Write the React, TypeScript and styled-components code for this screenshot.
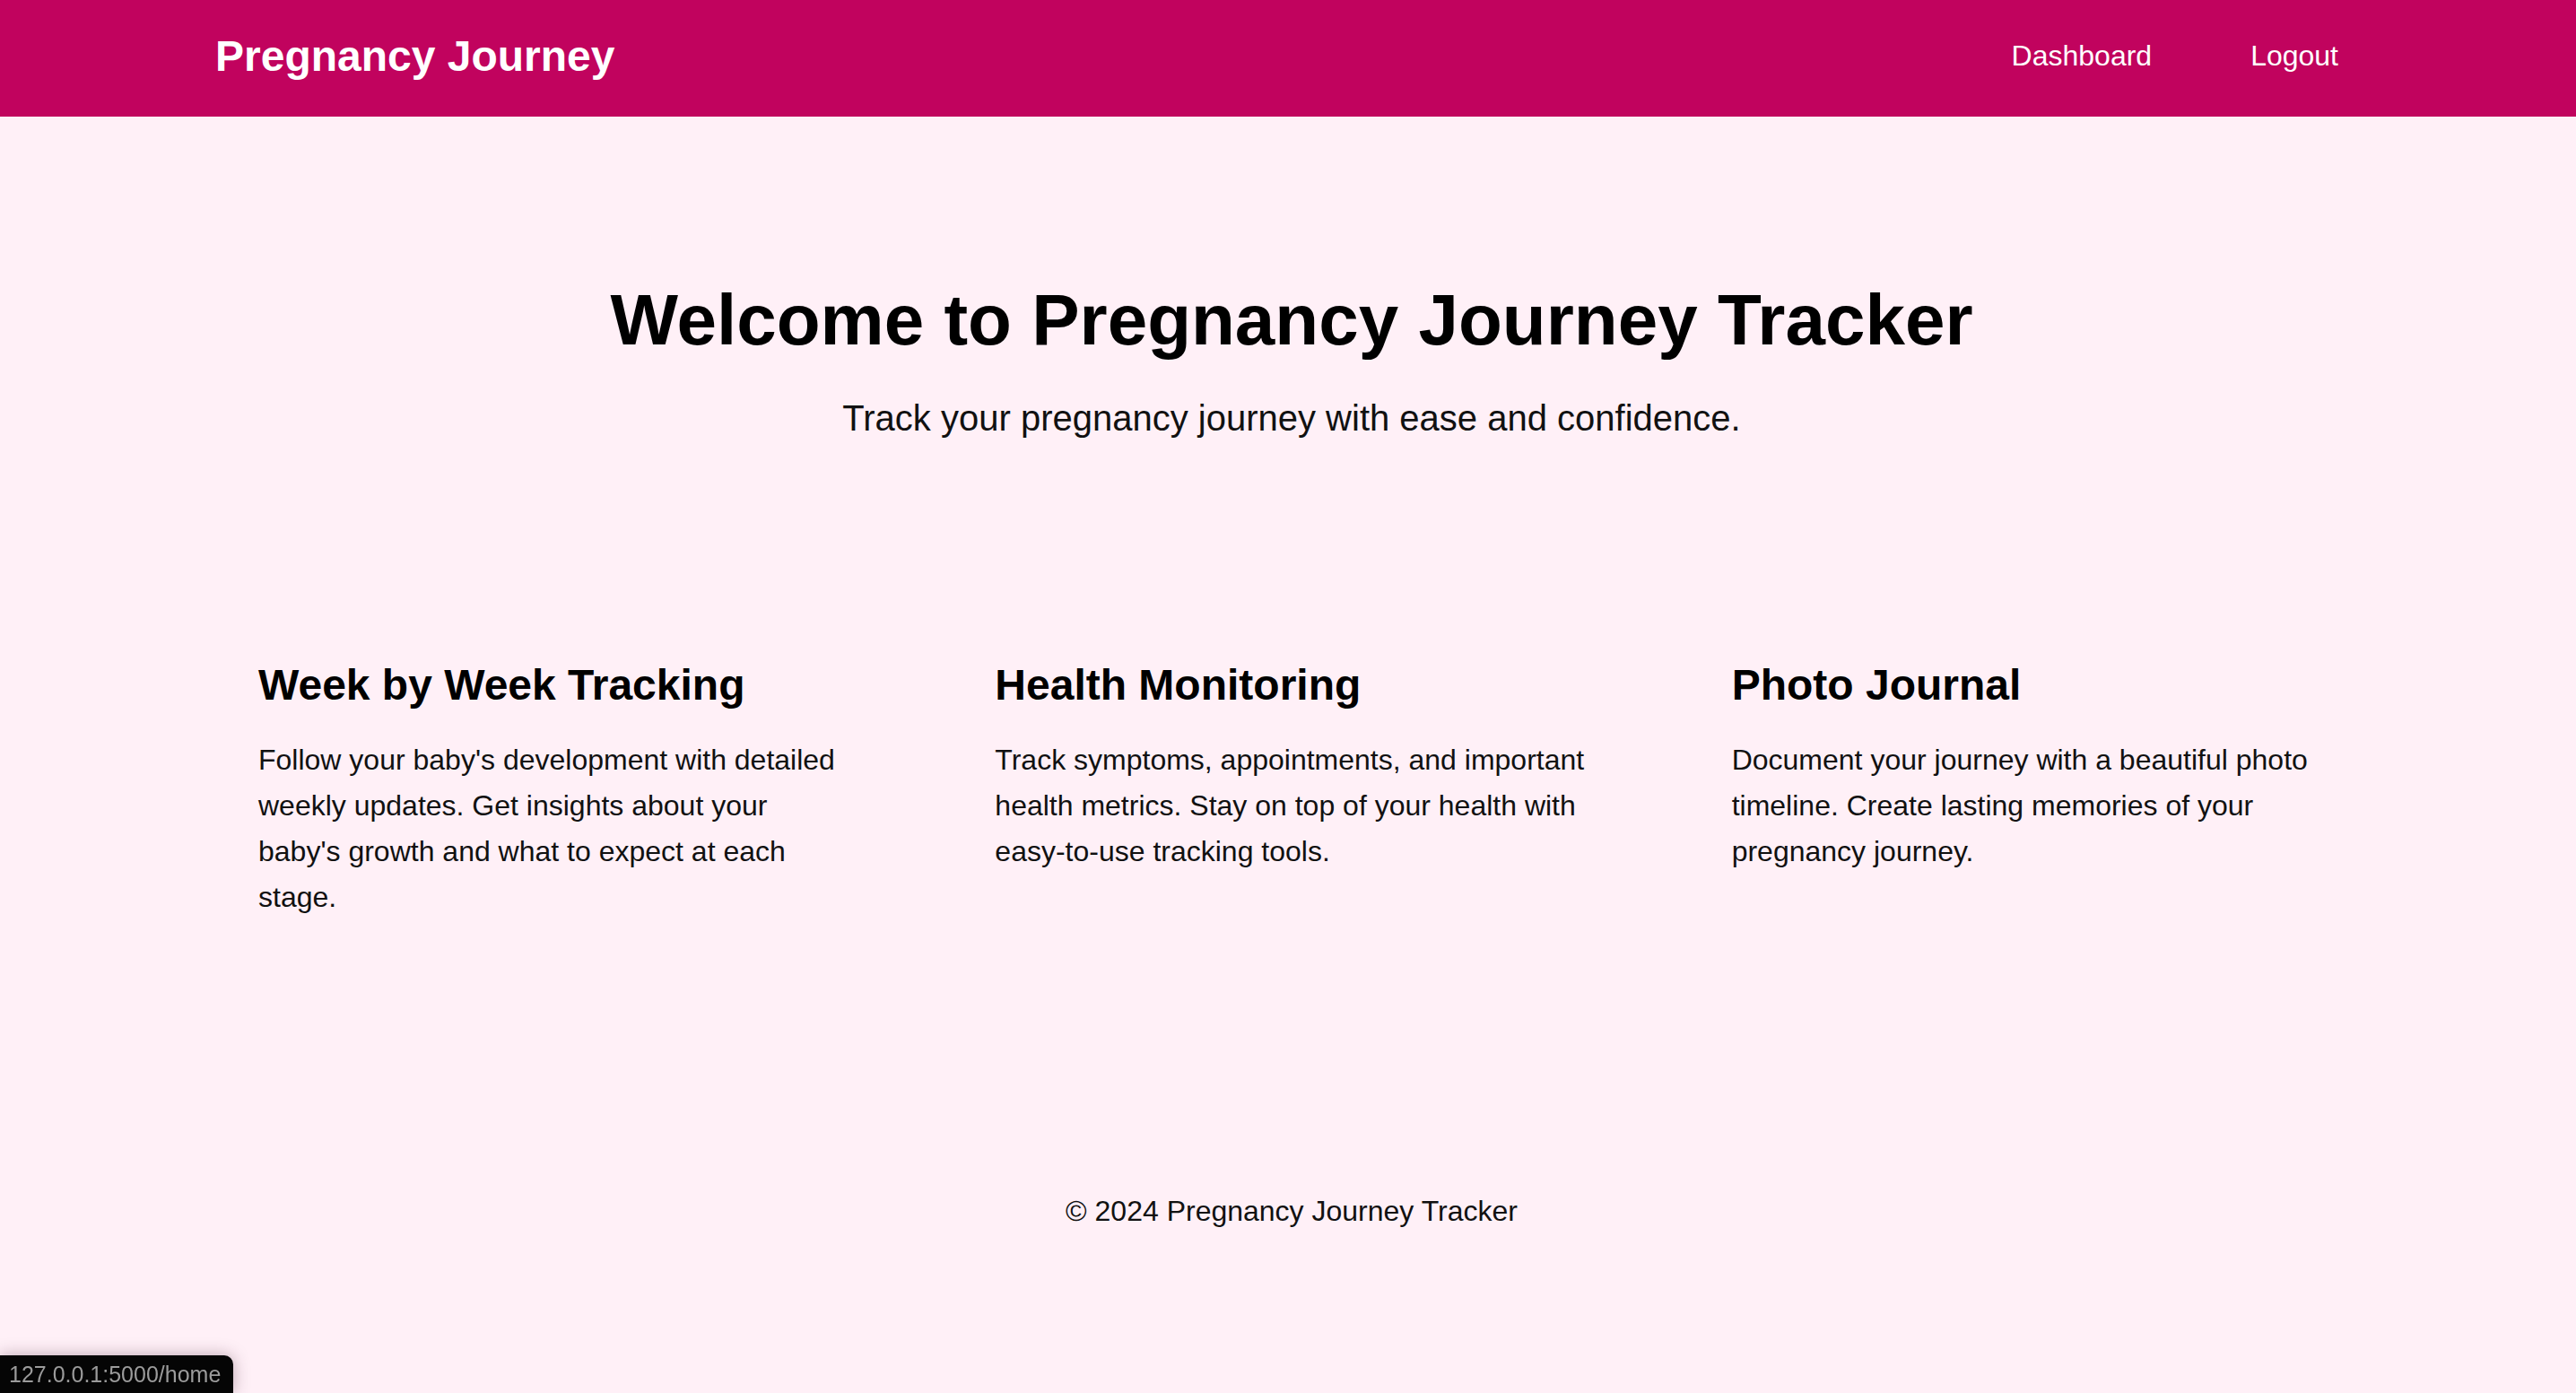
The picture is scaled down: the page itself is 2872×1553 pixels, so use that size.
import React from "react";
import styled, { createGlobalStyle } from "styled-components";

const GlobalStyle = createGlobalStyle`
  html, body {
    margin: 0;
    padding: 0;
  }
  body {
    background: #fff0f7;
    color: #000;
    font-family: "Liberation Sans", Arial, Helvetica, sans-serif;
    line-height: 1.6;
  }
  * { box-sizing: border-box; }
`;

const Page = styled.div`
  min-height: 100vh;
  display: flex;
  flex-direction: column;
`;

const Header = styled.header`
  background: #c1035e;
  height: 130px;
  padding-bottom: 4px;
  display: flex;
  align-items: center;
`;

const NavInner = styled.nav`
  width: 2400px;
  margin: 0 auto;
  padding: 0 29px 0 4px;
  display: flex;
  align-items: center;
  justify-content: space-between;
`;

const Brand = styled.a`
  color: #fff;
  font-size: 48px;
  font-weight: 700;
  text-decoration: none;
  line-height: 1.15;
`;

const NavLinks = styled.div`
  display: flex;
  align-items: center;
  gap: 110px;
  margin-bottom: 2px;
`;

const NavLink = styled.a`
  color: #fff;
  font-size: 32px;
  text-decoration: none;
  line-height: 1.15;
`;

const Main = styled.main`
  width: 2408px;
  padding-left: 8px;
  margin: 0 auto;
`;

const Hero = styled.section`
  padding-top: 179px;
  text-align: center;
`;

const HeroTitle = styled.h1`
  margin: 0 0 29px;
  font-size: 80px;
  font-weight: 700;
  line-height: 1.2;
  color: #000;
`;

const HeroSubtitle = styled.p`
  margin: 0;
  font-size: 40px;
  line-height: 1.6;
  color: #111;
`;

const Features = styled.section`
  margin-top: 189px;
  display: grid;
  grid-template-columns: repeat(3, 1fr);
  gap: 64px;
`;

const FeatureCard = styled.article`
  padding: 48px;
`;

const FeatureTitle = styled.h3`
  margin: 0 0 29px;
  font-size: 48px;
  font-weight: 700;
  line-height: 1.2;
  color: #000;
`;

const FeatureText = styled.p`
  margin: 0;
  font-size: 32px;
  line-height: 1.6;
  color: #111;
`;

const Footer = styled.footer`
  margin-top: 251px;
  text-align: center;
  font-size: 32px;
  line-height: 1.6;
  color: #111;
`;

const StatusBar = styled.div`
  position: fixed;
  left: 0;
  bottom: 0;
  height: 42px;
  padding: 0 14px 0 10px;
  background: #050505;
  color: #9b9b9b;
  font-family: "Liberation Sans", Arial, sans-serif;
  font-size: 25px;
  line-height: 42px;
  border-top-right-radius: 10px;
  box-shadow: 0 0 18px rgba(60, 30, 45, 0.35);
`;

const features = [
  {
    title: "Week by Week Tracking",
    text: "Follow your baby's development with detailed weekly updates. Get insights about your baby's growth and what to expect at each stage.",
  },
  {
    title: "Health Monitoring",
    text: "Track symptoms, appointments, and important health metrics. Stay on top of your health with easy-to-use tracking tools.",
  },
  {
    title: "Photo Journal",
    text: "Document your journey with a beautiful photo timeline. Create lasting memories of your pregnancy journey.",
  },
];

export default function App() {
  return (
    <>
      <GlobalStyle />
      <Page>
        <Header>
          <NavInner>
            <Brand href="#">Pregnancy Journey</Brand>
            <NavLinks>
              <NavLink href="#">Dashboard</NavLink>
              <NavLink href="#">Logout</NavLink>
            </NavLinks>
          </NavInner>
        </Header>
        <Main>
          <Hero>
            <HeroTitle>Welcome to Pregnancy Journey Tracker</HeroTitle>
            <HeroSubtitle>Track your pregnancy journey with ease and confidence.</HeroSubtitle>
          </Hero>
          <Features>
            {features.map((f) => (
              <FeatureCard key={f.title}>
                <FeatureTitle>{f.title}</FeatureTitle>
                <FeatureText>{f.text}</FeatureText>
              </FeatureCard>
            ))}
          </Features>
          <Footer>© 2024 Pregnancy Journey Tracker</Footer>
        </Main>
        <StatusBar>127.0.0.1:5000/home</StatusBar>
      </Page>
    </>
  );
}
